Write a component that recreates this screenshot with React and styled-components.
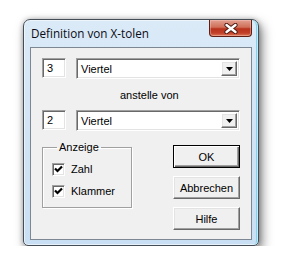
import React from 'react'
import styled, { createGlobalStyle } from 'styled-components'

const GlobalStyle = createGlobalStyle`
  html, body {
    margin: 0;
    background: #ffffff;
  }
  body {
    font-family: "Liberation Sans", Arial, sans-serif;
    font-size: 11px;
  }
`

function CheckMark() {
  return (
    <svg width="9" height="9" viewBox="0 0 9 9">
      <path d="M1 3.5 L3.5 6 L8 1.5" stroke="#000" strokeWidth="2.2" fill="none" />
    </svg>
  )
}

function CloseGlyph() {
  return (
    <svg width="14" height="11" viewBox="0 0 14 11">
      <path
        d="M2.5 2 L11.5 9 M11.5 2 L2.5 9"
        stroke="#4a1a12"
        strokeWidth="4.2"
        strokeLinecap="round"
      />
      <path
        d="M2.5 2 L11.5 9 M11.5 2 L2.5 9"
        stroke="#ffffff"
        strokeWidth="2.4"
        strokeLinecap="round"
      />
    </svg>
  )
}

function ComboBox({ value }) {
  return (
    <Combo>
      <ComboText>{value}</ComboText>
      <DropButton>
        <svg width="7" height="4" viewBox="0 0 7 4">
          <path d="M0 0 L7 0 L3.5 4 Z" fill="#000" />
        </svg>
      </DropButton>
    </Combo>
  )
}

function App() {
  return (
    <>
      <GlobalStyle />
      <Page>
        <Window>
          <TitleBar>
            <Title>Definition von X-tolen</Title>
            <CloseButton>
              <CloseGlyph />
            </CloseButton>
          </TitleBar>
          <Client>
            <FieldRow>
              <NumberEdit>3</NumberEdit>
              <ComboBox value="Viertel" />
            </FieldRow>
            <Caption>anstelle von</Caption>
            <FieldRow>
              <NumberEdit>2</NumberEdit>
              <ComboBox value="Viertel" />
            </FieldRow>
            <BottomRow>
              <Group>
                <Legend>Anzeige</Legend>
                <CheckRow>
                  <CheckBox>
                    <CheckMark />
                  </CheckBox>
                  <span>Zahl</span>
                </CheckRow>
                <CheckRow>
                  <CheckBox>
                    <CheckMark />
                  </CheckBox>
                  <span>Klammer</span>
                </CheckRow>
              </Group>
              <ButtonColumn>
                <PushButton $default>OK</PushButton>
                <PushButton>Abbrechen</PushButton>
                <PushButton>Hilfe</PushButton>
              </ButtonColumn>
            </BottomRow>
          </Client>
        </Window>
      </Page>
    </>
  )
}

export default App

const Page = styled.div`
  padding: 19px 0 0 23px;
`

const Window = styled.div`
  box-sizing: border-box;
  width: 236px;
  height: 227px;
  padding: 0 6px 5px 6px;
  border: 1px solid #454d57;
  border-radius: 7px 7px 5px 5px;
  background: linear-gradient(to bottom, #dbeaf7 0%, #d3e5f6 40%, #c9dff3 100%);
  box-shadow:
    inset 0 0 0 1px rgba(255, 255, 255, 0.55),
    inset -2px 0 0 #7fd2f2,
    3px 5px 11px rgba(0, 0, 0, 0.5),
    0 0 5px rgba(0, 0, 0, 0.25);
  display: flex;
  flex-direction: column;
`

const TitleBar = styled.div`
  height: 27px;
  display: flex;
  align-items: flex-start;
`

const Title = styled.div`
  padding: 5px 0 0 1px;
  font-family: "Open Sans", "Noto Sans", sans-serif;
  font-size: 11.7px;
  line-height: 16px;
  color: #0b0b14;
`

const CloseButton = styled.div`
  margin-left: auto;
  box-sizing: border-box;
  width: 43px;
  height: 17px;
  border: 1px solid #5e2016;
  border-top: none;
  border-radius: 0 0 4px 4px;
  background: linear-gradient(
    to bottom,
    #e2a091 0%,
    #d06f58 45%,
    #b8321c 55%,
    #c2412a 82%,
    #de7a5c 100%
  );
  box-shadow: inset 0 0 0 1px rgba(255, 210, 200, 0.4);
  display: flex;
  align-items: center;
  justify-content: center;
`

const Client = styled.div`
  box-sizing: border-box;
  height: 193px;
  border: 1px solid #7d8794;
  background: #f0f0f0;
  padding: 10px 11px 0 11px;
  display: flex;
  flex-direction: column;
  color: #000;
`

const FieldRow = styled.div`
  display: flex;
  align-items: flex-start;
  gap: 10px;
`

const sunken = `
  box-sizing: border-box;
  border-style: solid;
  border-width: 1px;
  border-color: #a0a0a0 #ffffff #ffffff #a0a0a0;
  box-shadow: inset 1px 1px 0 #696969, inset -1px -1px 0 #e3e3e3;
  background: #ffffff;
`

const NumberEdit = styled.div`
  ${sunken}
  width: 24px;
  height: 20px;
  padding: 2px 0 0 4px;
  line-height: 14px;
`

const Combo = styled.div`
  ${sunken}
  flex: 1;
  height: 21px;
  padding: 2px;
  display: flex;
  align-items: stretch;
`

const ComboText = styled.div`
  flex: 1;
  padding: 1px 0 0 2px;
  line-height: 14px;
`

const raised = `
  box-sizing: border-box;
  border-style: solid;
  border-width: 1px;
  border-color: #ffffff #696969 #696969 #ffffff;
  box-shadow: inset -1px -1px 0 #a0a0a0, inset 1px 1px 0 #e3e3e3;
  background: #f0f0f0;
`

const DropButton = styled.div`
  ${raised}
  width: 16px;
  display: flex;
  align-items: center;
  justify-content: center;
  padding-top: 1px;
`

const Caption = styled.div`
  margin: 10px 0 0 78px;
  line-height: 13px;
  height: 13px;
  margin-bottom: 8px;
`

const BottomRow = styled.div`
  margin-top: 10px;
  display: flex;
  justify-content: space-between;
  align-items: flex-start;
`

const Group = styled.fieldset`
  margin: 0;
  width: 90px;
  box-sizing: border-box;
  padding: 9px 0 9px 9px;
  border: 1px solid #a0a0a0;
  box-shadow: 1px 1px 0 #ffffff, inset 1px 1px 0 #ffffff;
  display: flex;
  flex-direction: column;
  gap: 9px;
`

const Legend = styled.legend`
  margin-left: 5px;
  padding: 0 2px;
  line-height: 13px;
`

const CheckRow = styled.div`
  display: flex;
  align-items: center;
  gap: 6px;
  height: 13px;
  line-height: 13px;
`

const CheckBox = styled.div`
  ${sunken}
  width: 13px;
  height: 13px;
  display: flex;
  align-items: center;
  justify-content: center;
  padding: 0;
`

const ButtonColumn = styled.div`
  margin-top: 4px;
  display: flex;
  flex-direction: column;
  gap: 8px;
`

const PushButton = styled.div`
  ${raised}
  width: 67px;
  height: 23px;
  display: flex;
  align-items: center;
  justify-content: center;
  ${(p) =>
    p.$default &&
    `
    border-color: #000;
    box-shadow: inset 1px 1px 0 #ffffff, inset -1px -1px 0 #696969, inset -2px -2px 0 #a0a0a0;
  `}
`
